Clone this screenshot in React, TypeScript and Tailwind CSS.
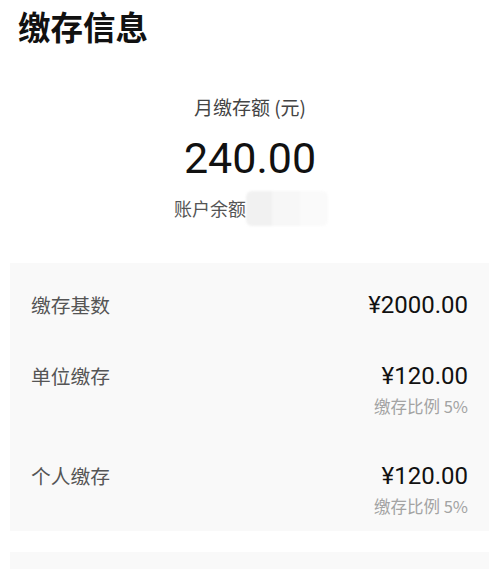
import React from 'react'

const cjk = { fontFamily: '"Noto Sans CJK SC", "Noto Sans", sans-serif' }
const num = { fontFamily: 'Roboto, "Noto Sans CJK SC", sans-serif' }

type Row = { label: string; value: string; ratio?: string }

const rows: Row[] = [
    { label: '缴存基数', value: '¥2000.00' },
    { label: '单位缴存', value: '¥120.00', ratio: '缴存比例 5%' },
    { label: '个人缴存', value: '¥120.00', ratio: '缴存比例 5%' },
]

const App: React.FC = () => {
    return (
        <div className="w-[500px] h-[569px] bg-white overflow-hidden" style={cjk}>
            <h1 className="px-[18px] pt-[6px] text-[32.5px] leading-[40px] font-bold text-[#111]">缴存信息</h1>

            <section className="flex flex-col items-center mt-[48px]">
                <p className="text-[19px] leading-[26px] text-[#444]">月缴存额 (元)</p>
                <p className="mt-[12px] text-[43px] leading-[52px] text-[#111]" style={num}>240.00</p>
                <div className="mt-[12px] ml-[2px] flex items-center h-[24px]">
                    <span className="text-[18px] leading-[24px] text-[#555]">账户余额</span>
                    <div className="flex h-[35px] w-[82px] rounded-[6px] overflow-hidden blur-[1px]">
                        <div className="w-[26px] bg-[#f1f1f1]" />
                        <div className="w-[28px] bg-[#f7f7f7]" />
                        <div className="flex-1 bg-[#fafafa]" />
                    </div>
                </div>
            </section>

            <section className="mt-[43px] mx-[10px] w-[479px] bg-[#f9f9f9] pt-[26px] pb-[13px] px-[21px]">
                {rows.map((r, i) => (
                    <div key={i} className={`flex justify-between ${i === 1 ? 'mt-[39px]' : ''} ${i === 2 ? 'mt-[42px]' : ''}`}>
                        <span className="text-[19.75px] leading-[32px] text-[#555]">{r.label}</span>
                        <div className="flex flex-col items-end">
                            <span className="text-[24px] leading-[32px] text-[#111]" style={num}>{r.value}</span>
                            {r.ratio && (
                                <span className="mt-[2px] text-[16.5px] leading-[24px] text-[#a3a3a3]">{r.ratio}</span>
                            )}
                        </div>
                    </div>
                ))}
            </section>

            <section className="mt-[21px] mx-[10px] w-[479px] h-[60px] bg-[#f9f9f9]" />
        </div>
    )
}

export default App
